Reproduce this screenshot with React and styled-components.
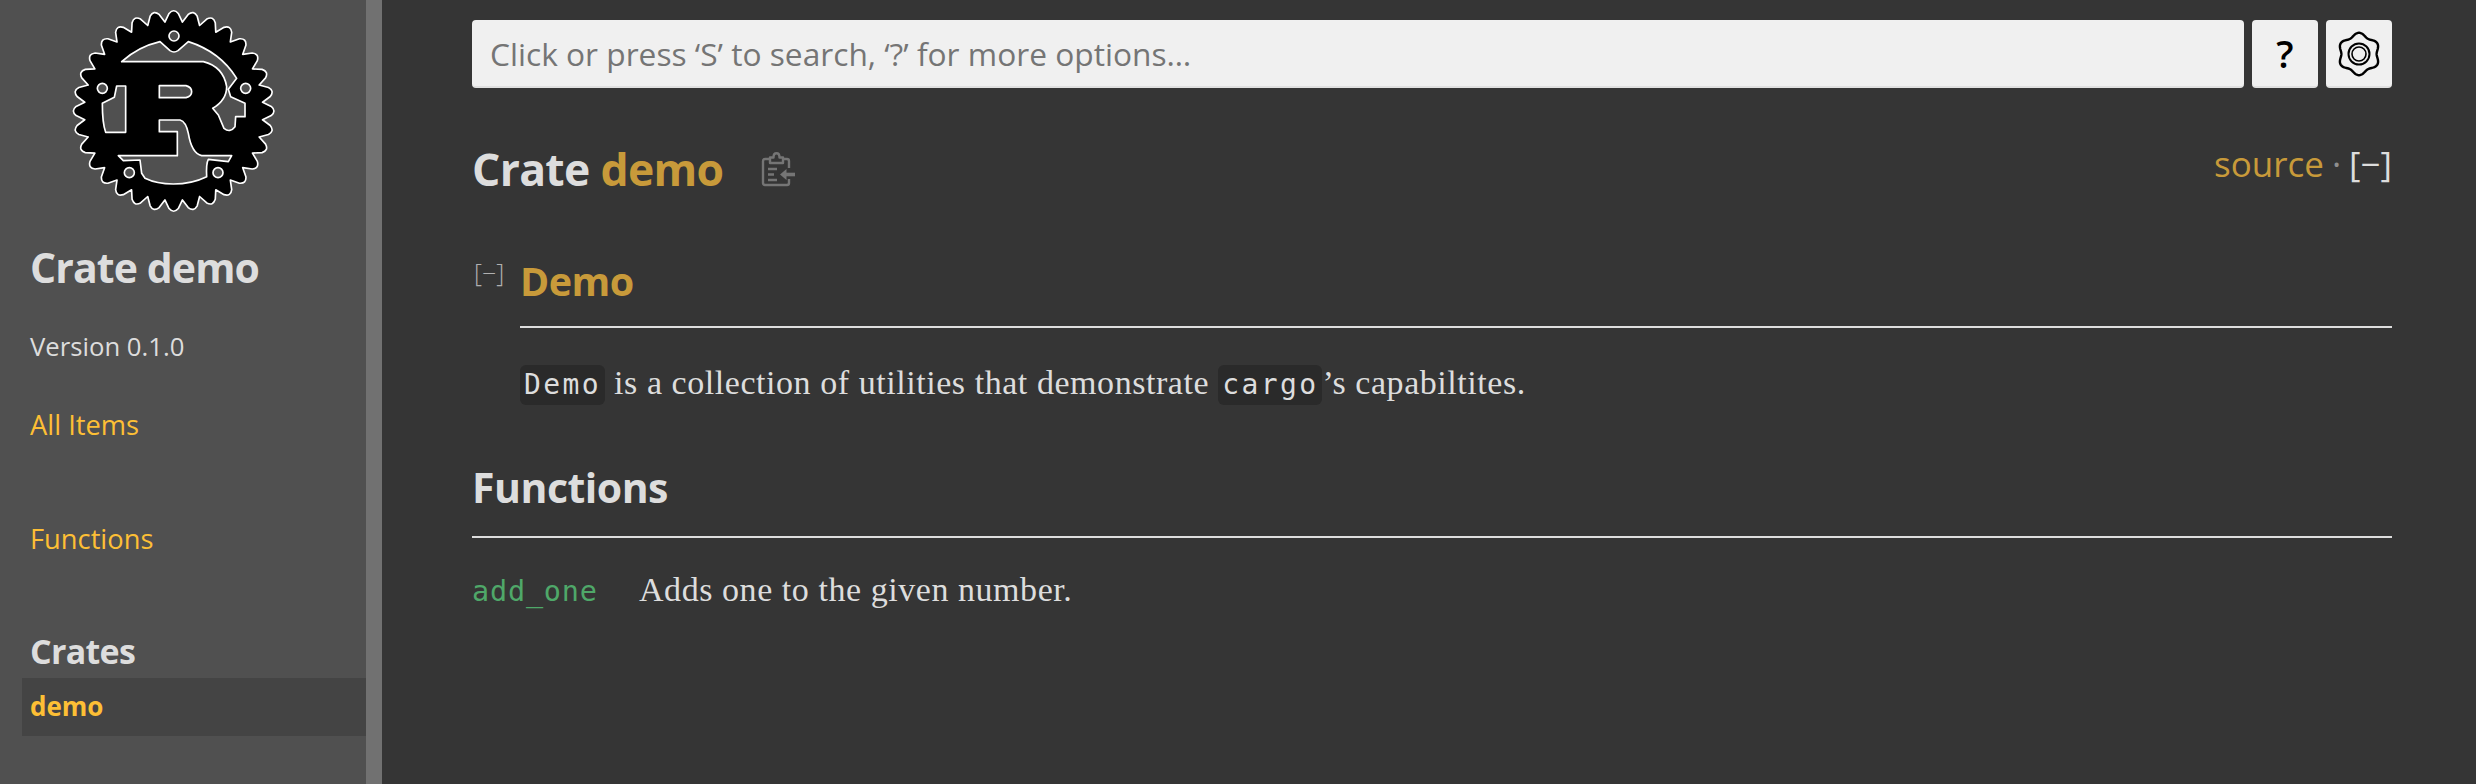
import React from "react";
import styled, { createGlobalStyle } from "styled-components";

const sans = `"Open Sans", "Noto Sans", sans-serif`;
const serif = `"Liberation Serif", serif`;
const mono = `"DejaVu Sans Mono", monospace`;

const GlobalStyle = createGlobalStyle`
  html, body { margin: 0; padding: 0; background: #353535; }
  body { font-family: ${sans}; color: #ddd; overflow: hidden; }
  a { text-decoration: none; color: inherit; }
`;

const Page = styled.div`
  display: flex;
  height: 784px;
`;

const Sidebar = styled.nav`
  width: 366px;
  flex: none;
  background: #505050;
  border-right: 16px solid #717171;
`;

const LogoBox = styled.div`
  height: 220px;
  padding-left: 60px;
`;

const SideTitle = styled.h2`
  margin: 19px 0 0 30px;
  font-size: 41px;
  line-height: 56px;
  font-weight: 700;
  letter-spacing: -0.9px;
  color: #ddd;
`;

const Version = styled.div`
  margin: 34px 0 0 30px;
  font-size: 25.7px;
  line-height: 36px;
  font-weight: 500;
  color: #ddd;
`;

const SideLink = styled.a`
  display: block;
  margin: ${(p) => p.$top}px 0 0 30px;
  font-size: 27.3px;
  line-height: 36px;
  font-weight: 500;
  color: #fdbf35;
`;

const SideHeading = styled.h3`
  margin: 72px 0 0 30px;
  font-size: 34px;
  line-height: 44px;
  font-weight: 700;
  letter-spacing: -0.7px;
  color: #ddd;
`;

const CurrentCrate = styled.a`
  display: block;
  margin: 5px 0 0 22px;
  padding-left: 8px;
  height: 58px;
  line-height: 56px;
  background: #444;
  font-size: 26px;
  font-weight: 700;
  color: #fdbf35;
`;

const Main = styled.main`
  flex: 1;
  min-width: 0;
  padding: 20px 84px 0 90px;
`;

const SearchRow = styled.div`
  display: flex;
  gap: 8px;
`;

const SearchInput = styled.input`
  flex: 1;
  min-width: 0;
  height: 68px;
  box-sizing: border-box;
  border: 0;
  border-bottom: 2px solid #e0e0e0;
  border-radius: 4px;
  padding: 0 16px 0 18px;
  background: #f0f0f0;
  font-family: ${sans};
  font-size: 31.7px;
  color: #111;
  &::placeholder { color: #757575; opacity: 1; }
`;

const IconButton = styled.button`
  width: 66px;
  height: 68px;
  flex: none;
  box-sizing: border-box;
  display: flex;
  align-items: center;
  justify-content: center;
  border: 0;
  border-bottom: 2px solid #e0e0e0;
  border-radius: 4px;
  padding: 0;
  background: #f0f0f0;
  font-family: ${sans};
  font-size: 38px;
  font-weight: 600;
  color: #000;
`;

const KnobSvg = styled.svg`
  display: block;
  margin-top: 1px;
`;

const TitleRow = styled.div`
  display: flex;
  justify-content: space-between;
  margin-top: 51px;
  height: 60px;
`;

const Title = styled.h1`
  margin: 0;
  display: flex;
  align-items: center;
  font-size: 44.5px;
  line-height: 60px;
  font-weight: 700;
  letter-spacing: -0.7px;
  color: #ddd;
  white-space: pre;
`;

const Gold = styled.a`
  color: #c89a3a;
`;

const ClipIcon = styled.svg`
  margin-left: 38px;
  display: block;
`;

const OutOfBand = styled.div`
  font-size: 35px;
  line-height: 50px;
  color: #ddd;
`;

const Dot = styled.span`
  color: #8f8f8f;
  margin: 0 8px;
`;

const Section = styled.section`
  margin-left: 48px;
  margin-top: 53px;
`;

const SectionTitle = styled.h2`
  position: relative;
  margin: 0;
  height: 74px;
  line-height: 58px;
  font-size: 39.5px;
  font-weight: 700;
  letter-spacing: -0.5px;
  color: #c89a3a;
  border-bottom: 2px solid #ddd;
`;

/* small collapse toggle hanging in the left gutter of the heading */
const Toggle = styled.span`
  position: absolute;
  left: -46px;
  top: -1px;
  font-size: 25px;
  line-height: 42px;
  font-weight: 300;
  font-family: ${sans};
  letter-spacing: 0;
  color: #b0b0b0;
`;

const Paragraph = styled.p`
  margin: 35px 0 0;
  font-family: ${serif};
  font-size: 34px;
  letter-spacing: 0.55px;
  line-height: 40px;
  color: #ddd;
`;

const Code = styled.code`
  display: inline-block;
  background: #2a2a2a;
  border-radius: 6px;
  padding: 0 4px;
  font-family: ${mono};
  font-size: 28px;
  letter-spacing: 2.4px;
  line-height: 40px;
  color: #ddd;
`;

const Heading = styled.h2`
  margin: 52px 0 0;
  height: 79px;
  line-height: 60px;
  font-size: 41px;
  font-weight: 700;
  letter-spacing: -0.5px;
  color: #ddd;
  border-bottom: 2px solid #ddd;
`;

const ItemRow = styled.div`
  display: flex;
  align-items: baseline;
  margin-top: 30px;
  line-height: 44px;
`;

const FnLink = styled.a`
  width: 167px;
  font-family: ${mono};
  font-size: 28.5px;
  letter-spacing: 0.8px;
  color: #4fa869;
`;

const ItemDesc = styled.div`
  font-family: ${serif};
  font-size: 34px;
  letter-spacing: 0.55px;
  color: #ddd;
`;

// gear outline for the logo, 32 teeth around the centre, in the trace's units
const gearPath = (() => {
  const cx = 341;
  const cy = 333;
  const n = 32;
  let d = "";
  for (let i = 0; i < n; i++) {
    const a = (i / n) * Math.PI * 2 - Math.PI / 2;
    const s = (Math.PI * 2) / n;
    const pt = (r, t) => `${(cx + r * Math.cos(t)).toFixed(1)} ${(cy + r * Math.sin(t)).toFixed(1)}`;
    d += `${i === 0 ? "M" : "L"}${pt(268, a - s * 0.5)} `;
    d += `L${pt(293, a - s * 0.24)} Q${pt(309, a)} ${pt(293, a + s * 0.24)} `;
  }
  return d + "Z";
})();

// knob outline for the settings button
const knobPath = (() => {
  let d = "";
  for (let i = 0; i <= 120; i++) {
    const t = (i / 120) * Math.PI * 2;
    const r = 19.4 + 1.8 * Math.cos(6 * t);
    d += `${i === 0 ? "M" : "L"}${(23 + r * Math.sin(t)).toFixed(2)} ${(23 - r * Math.cos(t)).toFixed(2)} `;
  }
  return d + "Z";
})();

function RustLogo() {
  const hole = { fill: "#505050", stroke: "#fff", strokeWidth: 5, strokeLinejoin: "round" };
  return (
    <svg width="230" height="220" viewBox="0 0 690 660">
      <path d={gearPath} fill="#000" stroke="#fff" strokeWidth="5" strokeLinejoin="round" />
      <path {...hole} d="M185 185 Q235 140 300 125 L330 152 Q342 160 354 152 L385 125 Q480 155 530 235 L505 268 L512 290 L555 310 L555 350 L527 350 L525 380 Q510 400 492 385 L475 345 L458 325 Q500 300 500 260 Q490 200 430 185 Z" />
      <path {...hole} d="M170 258 L197 258 L197 397 L137 397 Q127 370 127 310 L163 292 Z" />
      <path {...hole} d="M298 257 L378 257 Q395 262 395 275 Q395 288 378 293 L298 293 Z" />
      <path {...hole} d="M298 360 L360 360 Q378 365 385 400 Q395 460 425 467 L515 467 L505 485 L445 478 Q438 490 440 530 Q395 552 340 552 Q290 552 255 535 L245 520 L240 480 L190 482 L175 467 L352 467 L352 395 L298 395 Z" />
      <circle {...hole} cx="342" cy="108" r="15" />
      <circle {...hole} cx="127" cy="265" r="15" />
      <circle {...hole} cx="557" cy="265" r="15" />
      <circle {...hole} cx="208" cy="518" r="15" />
      <circle {...hole} cx="474" cy="518" r="15" />
    </svg>
  );
}

function CopyIcon() {
  return (
    <ClipIcon width="34" height="36" viewBox="0 0 34 36" fill="none" stroke="#757575" strokeWidth="2.4" strokeLinejoin="round">
      <path d="M22 8 H26 Q28 8 28 10 V17 M28 28 V32 Q28 34 26 34 H4 Q2 34 2 32 V10 Q2 8 4 8 H9" />
      <path d="M9 12 V6.5 H12.5 C12.5 0.8 18.5 0.8 18.5 6.5 H22 V12 Z" />
      <path d="M7 18 H16 M7 23.5 H13 M7 29 H16" />
      <path d="M34 23.5 H24" strokeWidth="3.6" />
      <path d="M19 23.5 L25.5 18 V29 Z" fill="#757575" stroke="none" />
    </ClipIcon>
  );
}

function KnobIcon() {
  return (
    <KnobSvg width="46" height="46" viewBox="0 0 46 46" fill="none" stroke="#000">
      <path d={knobPath} strokeWidth="2.4" />
      <circle cx="23" cy="23" r="10.5" strokeWidth="2" />
      <circle cx="23" cy="23" r="7" strokeWidth="1.6" />
    </KnobSvg>
  );
}

export default function App() {
  return (
    <Page>
      <GlobalStyle />
      <Sidebar>
        <LogoBox>
          <RustLogo />
        </LogoBox>
        <SideTitle>Crate demo</SideTitle>
        <Version>Version 0.1.0</Version>
        <SideLink $top={42} href="#">All Items</SideLink>
        <SideLink $top={78} href="#">Functions</SideLink>
        <SideHeading>Crates</SideHeading>
        <CurrentCrate href="#">demo</CurrentCrate>
      </Sidebar>
      <Main>
        <SearchRow>
          <SearchInput placeholder="Click or press ‘S’ to search, ‘?’ for more options…" readOnly />
          <IconButton>?</IconButton>
          <IconButton><KnobIcon /></IconButton>
        </SearchRow>
        <TitleRow>
          <Title>
            Crate <Gold href="#">demo</Gold>
            <CopyIcon />
          </Title>
          <OutOfBand>
            <Gold href="#">source</Gold>
            <Dot>·</Dot>[−]
          </OutOfBand>
        </TitleRow>
        <Section>
          <SectionTitle>
            <Toggle>[−]</Toggle>
            Demo
          </SectionTitle>
          <Paragraph>
            <Code>Demo</Code> is a collection of utilities that demonstrate <Code>cargo</Code>’s capabiltites.
          </Paragraph>
        </Section>
        <Heading>Functions</Heading>
        <ItemRow>
          <FnLink href="#">add_one</FnLink>
          <ItemDesc>Adds one to the given number.</ItemDesc>
        </ItemRow>
      </Main>
    </Page>
  );
}
